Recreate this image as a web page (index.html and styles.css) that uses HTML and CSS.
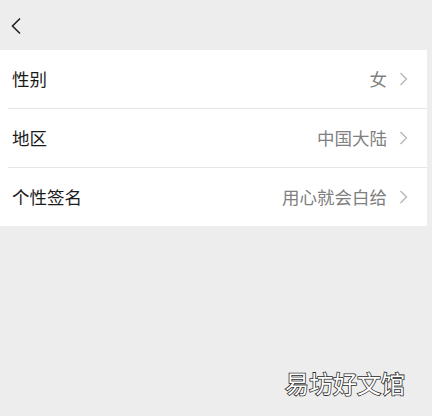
FILE: index.html
```html
<!DOCTYPE html>
<html lang="zh">
<head>
<meta charset="utf-8">
<link rel="stylesheet" href="styles.css">
</head>
<body>
<div class="screen">
  <header class="topbar">
    <svg class="back" width="12" height="18" viewBox="0 0 12 18"><path d="M10 1.5 L2.5 9 L10 16.5" fill="none" stroke="#222" stroke-width="1.6"/></svg>
  </header>
  <section class="panel">
    <div class="row">
      <span class="label">性别</span>
      <span class="value">女</span>
      <svg class="chev" width="9" height="14" viewBox="0 0 9 14"><path d="M1.5 1 L7.5 7 L1.5 13" fill="none" stroke="#b5b5b5" stroke-width="1.3"/></svg>
    </div>
    <div class="row">
      <span class="label">地区</span>
      <span class="value">中国大陆</span>
      <svg class="chev" width="9" height="14" viewBox="0 0 9 14"><path d="M1.5 1 L7.5 7 L1.5 13" fill="none" stroke="#b5b5b5" stroke-width="1.3"/></svg>
    </div>
    <div class="row">
      <span class="label">个性签名</span>
      <span class="value">用心就会白给</span>
      <svg class="chev" width="9" height="14" viewBox="0 0 9 14"><path d="M1.5 1 L7.5 7 L1.5 13" fill="none" stroke="#b5b5b5" stroke-width="1.3"/></svg>
    </div>
  </section>
  <div class="watermark">易坊好文馆</div>
</div>
</body>
</html>
```

FILE: styles.css
```css
html, body {
  margin: 0;
  padding: 0;
  background: #ededed;
}
.screen {
  position: relative;
  width: 432px;
  height: 416px;
  overflow: hidden;
  font-family: "Noto Sans CJK SC", "Noto Sans", sans-serif;
}
.topbar {
  height: 50px;
  display: flex;
  align-items: center;
  padding-left: 10px;
  box-sizing: border-box;
}
.back {
  display: block;
  margin-top: 2px;
}
.panel {
  width: 427px;
  background: #ffffff;
}
.row {
  height: 58px;
  display: flex;
  align-items: center;
  padding: 0 19px 0 12px;
  position: relative;
}
.row + .row {
  border-top: 1px solid #e6e6e6;
  margin-left: 8px;
  padding-left: 4px;
}
.label {
  flex: 1;
  font-size: 17.5px;
  color: #1b1b1b;
  line-height: 1;
}
.value {
  font-size: 17.5px;
  color: #808080;
  line-height: 1;
  margin-right: 12px;
}
.chev {
  display: block;
}
.watermark {
  position: absolute;
  left: 285px;
  top: 367px;
  font-size: 24px;
  line-height: 1.3;
  color: #ffffff;
  -webkit-text-stroke: 1.6px #2a2a2a;
  paint-order: stroke fill;
  letter-spacing: 0;
}
```
